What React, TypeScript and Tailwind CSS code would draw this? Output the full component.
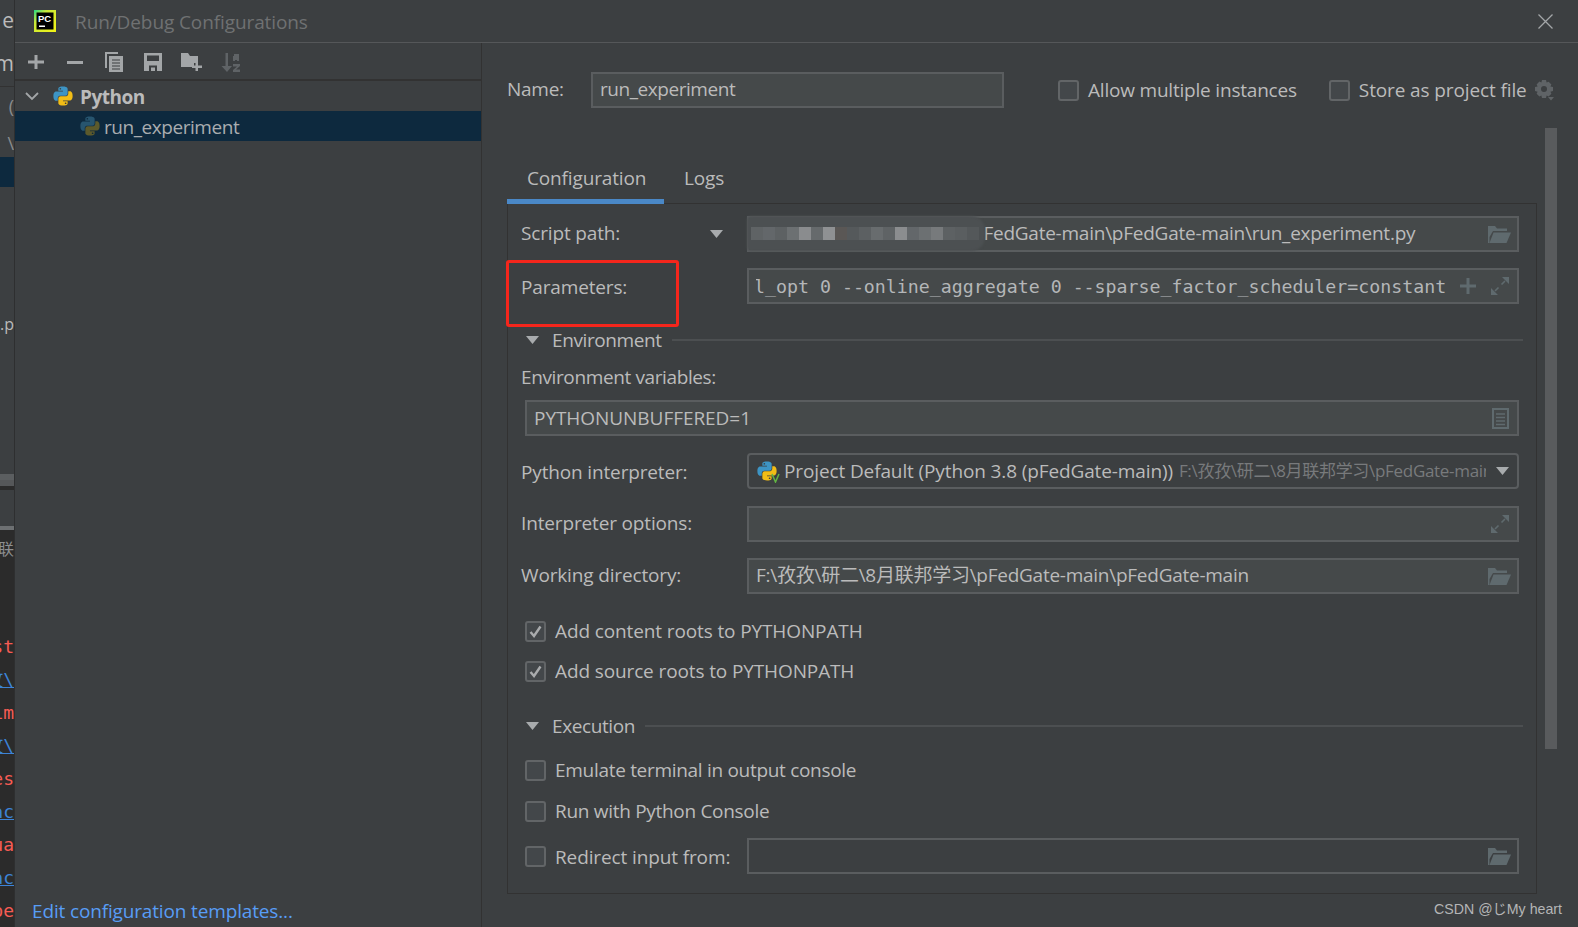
import type { ReactNode } from "react";

const SANS = "font-['Open_Sans','Noto_Sans_CJK_SC',sans-serif]";

const Triangle = ({ className = "" }: { className?: string }) => (
  <svg width="13" height="8" viewBox="0 0 14 9" className={className} preserveAspectRatio="none">
    <path d="M0 0h14L7 9z" fill="#a8abad" />
  </svg>
);

const PythonIcon = ({ dim = false, size = 22 }: { dim?: boolean; size?: number }) => (
  <svg width={size} height={size} viewBox="0 0 32 32" className="shrink-0">
    <path
      fill={dim ? "#27556f" : "#3d94c4"}
      d="M15.885 2.1c-7.1 0-6.651 3.07-6.651 3.07v3.19h6.752v1H6.545S2 8.8 2 16.005s4.013 6.912 4.013 6.912H8.33v-3.361s-.13-4.013 3.9-4.013h6.762s3.772.06 3.772-3.652V5.8s.572-3.712-6.842-3.712zm-3.732 2.137a1.214 1.214 0 1 1 0 2.428 1.214 1.214 0 0 1 0-2.428z"
    />
    <path
      fill={dim ? "#5c5a2c" : "#f2bd16"}
      d="M16.085 29.91c7.1 0 6.651-3.08 6.651-3.08v-3.18h-6.751v-1h9.441S30 23.16 30 15.965s-4.013-6.912-4.013-6.912H23.67V12.4s.13 4.013-3.9 4.013h-6.765s-3.772-.06-3.772 3.652v6.1s-.572 3.712 6.842 3.712zm3.732-2.137a1.214 1.214 0 1 1 0-2.428 1.214 1.214 0 0 1 0 2.428z"
    />
  </svg>
);

const FolderIcon = () => (
  <svg width="23" height="17" viewBox="0 0 23 17" className="shrink-0 -mr-[2px]">
    <path d="M0 0h7l2 2.500h10V5H5L1.500 11V17H0z" fill="#5f6a6e" />
    <path d="M5.500 6.500H23L18.500 17H1.500z" fill="#5f6a6e" />
  </svg>
);

const ExpandIcon = () => (
  <svg width="18" height="18" viewBox="0 0 18 18" className="shrink-0" fill="none">
    <path d="M11 0h7v7zM0 11l7 7H0z" fill="#5f6a6e" />
    <path d="M14 4l-3.500 3.500M4 14l3.500-3.500" stroke="#5f6a6e" strokeWidth="1.600" />
  </svg>
);

const PlusIcon = () => (
  <svg width="16" height="16" viewBox="0 0 16 16" className="shrink-0">
    <path d="M6.500 0h3v6.500H16v3H9.500V16h-3V9.500H0v-3h6.500z" fill="#5f6a6e" />
  </svg>
);

const NoteIcon = () => (
  <svg width="17" height="21" viewBox="0 0 17 21" className="shrink-0" fill="none">
    <rect x="1" y="1" width="15" height="19" stroke="#5f6a6e" strokeWidth="2" />
    <path d="M4 6h9M4 9.500h9M4 13h9M4 16.500h9" stroke="#5f6a6e" strokeWidth="1.600" />
  </svg>
);

const ToolbarIcons = () => (
  <div className="h-[38px] pl-px pt-[2px] flex items-center border-b-2 border-[#323232] shrink-0">
    <div className="w-[39px] flex justify-center">
      <svg width="16" height="14" viewBox="0 0 16 14">
        <path d="M6.500 0h3v5.500H16v3H9.500V14h-3V8.500H0v-3h6.500z" fill="#a3a6a8" />
      </svg>
    </div>
    <div className="w-[39px] flex justify-center">
      <svg width="16" height="3" viewBox="0 0 16 3">
        <rect width="16" height="3" fill="#a3a6a8" />
      </svg>
    </div>
    <div className="w-[39px] flex justify-center">
      <svg width="18" height="20" viewBox="0 0 18 20">
        <path d="M0 0h13v2H2v14H0z" fill="#a3a6a8" />
        <path d="M4 4h14v16H4z" fill="#a3a6a8" />
        <path d="M7 8h8M7 11h8M7 14h8M7 17h8" stroke="#3c3f41" strokeWidth="1.200" />
      </svg>
    </div>
    <div className="w-[39px] flex justify-center">
      <svg width="18" height="18" viewBox="0 0 18 18">
        <path d="M0 0h18v18H0z" fill="#a3a6a8" />
        <path d="M3 2.500h12V8H3zM5 12.500h8V18H5z" fill="#3c3f41" />
        <path d="M7 14.500h4V18H7z" fill="#a3a6a8" />
      </svg>
    </div>
    <div className="w-[39px] flex justify-center">
      <svg width="21" height="18" viewBox="0 0 21 18">
        <path d="M0 0h7l2 3h8v7h-4v4H0z" fill="#a3a6a8" />
        <path d="M14.500 9h2.500v3.500h4V15h-4v3h-2.500v-3H11v-2.500h3.500z" fill="#a3a6a8" />
      </svg>
    </div>
    <div className="w-[39px] flex justify-center">
      <svg width="20" height="19" viewBox="0 0 20 19">
        <path d="M4.500 0h2.500v13h4l-5 6-5.500-6h4z" fill="#5f6366" />
        <path d="M13 1h5v7h-2V7h-2v1h-2V3h1zM12 11h7v2l-4 3.500h4V19h-7v-2l4-3.500h-4z" fill="#5f6366" />
      </svg>
    </div>
  </div>
);

const Field = ({
  children,
  icon,
  plain = false,
  round = false,
  className = "",
}: {
  children?: ReactNode;
  icon?: ReactNode;
  plain?: boolean;
  round?: boolean;
  className?: string;
}) => (
  <div
    className={`relative h-[36px] flex items-center min-w-0 pl-[7px] pr-[8px] border-2 border-[#5a5d5f] ${
      plain ? "bg-[#3c3f41]" : "bg-[#45494a]"
    } ${round ? "rounded-[4px]" : ""} ${className}`}
  >
    <div className="flex-1 min-w-0 overflow-hidden whitespace-nowrap flex items-center">{children}</div>
    {icon}
  </div>
);

const Row = ({
  label,
  children,
  className = "",
  labelClass = "",
}: {
  label: ReactNode;
  children: ReactNode;
  className?: string;
  labelClass?: string;
}) => (
  <div className={`flex items-center pr-[17px] ${className}`}>
    <div className={`w-[239px] pl-[13px] shrink-0 whitespace-nowrap tracking-[-0.15px] ${labelClass}`}>{label}</div>
    <div className="flex-1 min-w-0">{children}</div>
  </div>
);

const Checkbox = ({ checked = false }: { checked?: boolean }) => (
  <span className="w-[21px] h-[21px] shrink-0 rounded-[3px] border-2 border-[#626567] bg-[#43474a] flex items-center justify-center">
    {checked && (
      <svg width="13" height="13" viewBox="0 0 13 13" fill="none">
        <path d="M1.500 7l3.500 4L11.500 1.500" stroke="#a9abad" strokeWidth="2.400" />
      </svg>
    )}
  </span>
);

const CheckRow = ({
  label,
  checked,
  className = "",
  tight = false,
}: {
  label: string;
  checked?: boolean;
  className?: string;
  tight?: boolean;
}) => (
  <div className={`h-[24px] pl-[17px] flex items-center gap-[9px] whitespace-nowrap ${className}`}>
    <Checkbox checked={checked} />
    <span className={tight ? "tracking-[-0.3px]" : "tracking-[-0.12px]"}>{label}</span>
  </div>
);

const Section = ({ title, className = "" }: { title: string; className?: string }) => (
  <div className={`h-[20px] pl-[18px] pr-[13px] flex items-center ${className}`}>
    <Triangle />
    <span className="ml-[13px] tracking-[-0.4px] whitespace-nowrap">{title}</span>
    <div className="flex-1 h-[2px] bg-[#4c4f51] ml-[10px]" />
  </div>
);

const SCRIPT_BLUR = [
  "#5f6365", "#63676a", "#5d6163", "#6c7072", "#8a8c8e", "#666a6c", "#8f9193", "#5a5755", "#55595b",
  "#5c6062", "#686c6e", "#5f6365", "#8b8d8f", "#63676a", "#6c7072", "#777a7c", "#5d6163", "#5a5e60",
  "#54585a",
];

const CODE_LINES = [
  { t: "st", c: "text-[#f75c54]", u: false },
  { t: "攻\\", c: "text-[#3d83d6]", u: true },
  { t: "im", c: "text-[#f75c54]", u: false },
  { t: "攻\\", c: "text-[#3d83d6]", u: true },
  { t: "es", c: "text-[#f75c54]", u: false },
  { t: "ac", c: "text-[#3d83d6]", u: true },
  { t: "ua", c: "text-[#f75c54]", u: false },
  { t: "ac", c: "text-[#3d83d6]", u: true },
  { t: "pe", c: "text-[#f75c54]", u: false },
];

const Sliver = () => (
  <div className="w-[15px] shrink-0 border-r border-[#2e2f30] h-full flex flex-col overflow-hidden text-[#bbbbbb] text-[21px]">
    <div className="h-[42px] flex items-center justify-end shrink-0">
      <span>e</span>
    </div>
    <div className="h-[45px] flex items-center justify-end border-b border-[#323232] shrink-0">
      <span>m</span>
    </div>
    <div className="h-[70px] flex flex-col items-end shrink-0 pt-[8px] text-[#8a8c8e] text-[18px]">
      <span className="leading-[22px]">(</span>
      <span className="leading-[22px] mt-[15px]">\</span>
    </div>
    <div className="h-[30px] bg-[#0d293e] shrink-0" />
    <div className="h-[149px] shrink-0 flex items-end justify-end text-[16px] leading-[24px]">
      <span>a.p</span>
    </div>
    <div className="h-[138px] shrink-0" />
    <div className="h-[6px] bg-[#5b5e60] shrink-0" />
    <div className="h-[6px] bg-[#555759] shrink-0" />
    <div className="h-[4px] bg-[#2b2b2b] shrink-0" />
    <div className="h-[36px] shrink-0" />
    <div className="h-[4px] bg-[#6d7072] shrink-0" />
    <div className="flex-1 bg-[#2b2b2b] font-['DejaVu_Sans_Mono','Noto_Sans_CJK_SC',monospace] text-[18px]">
      <div className="h-[30px] flex justify-end items-end text-[#8d8f91] text-[16px] font-['Noto_Sans_CJK_SC',sans-serif] whitespace-nowrap">
        月联
      </div>
      <div className="flex flex-col gap-[11px] pt-[76px]">
        {CODE_LINES.map((line, i) => (
          <div
            key={i}
            className={`h-[22px] leading-[22px] flex justify-end whitespace-nowrap ${line.c} ${line.u ? "underline" : ""}`}
          >
            {line.t}
          </div>
        ))}
      </div>
    </div>
  </div>
);

const TitleBar = () => (
  <div className="h-[43px] shrink-0 border-b border-[#555759] flex items-center pl-[19px] pr-[25px]">
    <svg width="22" height="22" viewBox="0 0 22 22" className="shrink-0">
      <defs>
        <linearGradient id="pc" x1="0" y1="0" x2="1" y2="1">
          <stop offset="0" stopColor="#21d789" />
          <stop offset="0.3" stopColor="#c8e83a" />
          <stop offset="1" stopColor="#f4f414" />
        </linearGradient>
      </defs>
      <rect width="22" height="22" fill="url(#pc)" />
      <rect x="2.500" y="2.500" width="17" height="17" fill="#000" />
      <text x="4" y="11.500" fontSize="9.500" fontWeight="700" fill="#fff" fontFamily="Liberation Sans">
        PC
      </text>
      <rect x="5" y="15.500" width="6" height="1.500" fill="#fff" />
    </svg>
    <span className="ml-[19px] pt-[2px] text-[#6f7172] tracking-[-0.1px]">Run/Debug Configurations</span>
    <svg width="15" height="15" viewBox="0 0 15 15" className="ml-auto" fill="none">
      <path d="M.5.5l14 14M14.500.5l-14 14" stroke="#a3a6a8" strokeWidth="1.300" />
    </svg>
  </div>
);

const TreePanel = () => (
  <div className="w-[467px] shrink-0 border-r border-[#323232] flex flex-col h-full">
    <ToolbarIcons />
    <div className="h-[30px] flex items-center pl-[10px] shrink-0">
      <svg width="14" height="9" viewBox="0 0 14 9" fill="none" className="shrink-0">
        <path d="M1 1l6 6 6-6" stroke="#a3a6a8" strokeWidth="1.800" />
      </svg>
      <span className="ml-[13px]">
        <PythonIcon />
      </span>
      <span className="ml-[6px] pt-[3px] font-bold tracking-[-0.5px]">Python</span>
    </div>
    <div className="h-[30px] bg-[#0d293e] flex items-center pl-[64px] shrink-0">
      <PythonIcon dim />
      <span className="ml-[3px] pt-[3px] text-[#a9adb0] tracking-[-0.45px]">run_experiment</span>
    </div>
    <div className="mt-auto pl-[17px] pb-[2px] text-[#589df6] tracking-[-0.15px]">Edit configuration templates...</div>
  </div>
);

const ConfigHeader = () => (
  <div className="h-[85px] shrink-0 pt-[29px] pl-[25px] flex items-start">
    <div className="h-[36px] w-[84px] pb-[2px] flex items-center tracking-[-0.25px]">Name:</div>
    <Field className="w-[413px]">
      <span className="tracking-[-0.45px] pb-[2px]">run_experiment</span>
    </Field>
    <div className="h-[36px] ml-[54px] flex items-center gap-[9px] tracking-[-0.2px] whitespace-nowrap">
      <Checkbox />
      <span>Allow multiple instances</span>
    </div>
    <div className="h-[36px] ml-[32px] flex items-center gap-[9px] tracking-[-0.12px] whitespace-nowrap">
      <Checkbox />
      <span>Store as project file</span>
      <svg width="20" height="21" viewBox="0 0 20 21" className="-ml-[2px]">
        <path
          fill="#5f6366"
          d="M8 0h4l.6 2.600 2-.9 2.800 2.800-1 2 2.600.6v4l-2.600.6 1 2-2.800 2.800-2-1L12 18H8l-.6-2.500-2 1-2.800-2.800 1-2L1 11V7l2.600-.6-1-2 2.800-2.800 2 1zM10 6a3 3 0 1 0 0 6 3 3 0 0 0 0-6z"
        />
        <path fill="#5f6366" d="M14 17h6l-3 3.500z" />
      </svg>
    </div>
  </div>
);

const RunConfigForm = () => (
  <div className="h-[690px] border-x border-b border-[#323232] pt-[12px]">
    <div className="flex items-center pr-[17px]">
      <div className="w-[239px] pl-[13px] pr-[24px] flex items-center justify-between shrink-0">
        <span className="tracking-[-0.15px] pb-[2px]">Script path:</span>
        <Triangle />
      </div>
      <Field className="flex-1 overflow-visible" icon={<FolderIcon />}>
        <span className="ml-[216px] pb-[2px] tracking-[-0.24px]">pFedGate-main\pFedGate-main\run_experiment.py</span>
        {/* pixelated smear over the private part of the path */}
        <div className="absolute left-[-2px] top-[-2px] w-[238px] h-[35px] rounded-l-[4px] rounded-r-[14px] bg-[#4c5052] blur-[1px]" />
        <div className="absolute left-[2px] top-[9px] h-[13px] flex">
          {SCRIPT_BLUR.map((color, i) => (
            <div key={i} className="w-[12px] h-full" style={{ backgroundColor: color }} />
          ))}
        </div>
      </Field>
    </div>

    <Row label="Parameters:" labelClass="pt-[2px] tracking-[-0.5px]" className="mt-[16px]">
      <Field
        icon={
          <div className="flex items-center gap-[15px]">
            <PlusIcon />
            <ExpandIcon />
          </div>
        }
      >
        <span className="-ml-[2px] pt-[2px] font-['DejaVu_Sans_Mono',monospace] text-[18.25px] text-[#b4b6b8]">
          l_opt 0 --online_aggregate 0 --sparse_factor_scheduler=constant
        </span>
      </Field>
    </Row>

    <Section title="Environment" className="mt-[26px]" />
    <div className="mt-[17px] h-[20px] pl-[13px] flex items-center tracking-[-0.38px]">Environment variables:</div>
    <div className="mt-[13px] ml-[17px] mr-[17px]">
      <Field icon={<NoteIcon />}>
        <span className="tracking-[-0.05px]">PYTHONUNBUFFERED=1</span>
      </Field>
    </div>

    <Row label="Python interpreter:" labelClass="pt-[2px]" className="mt-[17px]">
      <Field plain round icon={<Triangle className="ml-[10px]" />}>
        <span className="relative shrink-0">
          <PythonIcon />
          <svg width="9" height="10" viewBox="0 0 9 10" className="absolute right-[-2px] bottom-[-1px]" fill="none">
            <path d="M1 1l3.500 8L8 1" stroke="#62b543" strokeWidth="1.500" />
          </svg>
        </span>
        <span className="ml-[6px] tracking-[-0.12px]">Project Default (Python 3.8 (pFedGate-main))</span>
        <span className="ml-[6px] text-[17px] text-[#787a7c] tracking-[-0.3px]">F:\孜孜\研二\8月联邦学习\pFedGate-main</span>
      </Field>
    </Row>
    <Row label="Interpreter options:" labelClass="pb-[2px]" className="mt-[17px]">
      <Field icon={<ExpandIcon />} />
    </Row>
    <Row label="Working directory:" labelClass="pb-[2px]" className="mt-[16px]">
      <Field icon={<FolderIcon />}>
        <span className="tracking-[-0.26px] pb-[2px]">F:\孜孜\研二\8月联邦学习\pFedGate-main\pFedGate-main</span>
      </Field>
    </Row>

    <CheckRow label="Add content roots to PYTHONPATH" checked className="mt-[25px]" />
    <CheckRow label="Add source roots to PYTHONPATH" checked className="mt-[16px]" />

    <Section title="Execution" className="mt-[33px]" />
    <CheckRow label="Emulate terminal in output console" tight className="mt-[22px]" />
    <CheckRow label="Run with Python Console" tight className="mt-[17px]" />

    <div className="mt-[15px] flex items-center pr-[17px]">
      <div className="w-[239px] shrink-0 pl-[17px] flex items-center gap-[9px] whitespace-nowrap tracking-[-0.12px]">
        <Checkbox />
        <span className="pt-[2px]">Redirect input from:</span>
      </div>
      <Field plain className="flex-1" icon={<FolderIcon />} />
    </div>
  </div>
);

export default function App() {
  return (
    <div
      className={`relative w-screen h-screen overflow-hidden flex bg-[#3c3f41] text-[#bbbbbb] text-[19px] ${SANS}`}
    >
      <Sliver />
      <div className="flex-1 min-w-0 flex flex-col">
        <TitleBar />
        <div className="flex-1 flex min-h-0">
          <TreePanel />
          <div className="flex-1 min-w-0 flex flex-col">
            <ConfigHeader />
            <div className="flex">
              <div className="w-[1055px] shrink-0 pl-[25px] pt-[32px]">
                <div className="h-[44px] border-b border-[#323232] flex">
                  <div className="w-[157px] h-[44px] border-b-[5px] border-[#4a88c7] pl-[20px] pb-[2px] flex items-center tracking-[-0.15px]">
                    Configuration
                  </div>
                  <div className="ml-[20px] h-[44px] pb-[7px] flex items-center tracking-[-0.15px]">Logs</div>
                </div>
                <RunConfigForm />
              </div>
              <div className="ml-[8px] w-[12px] h-[621px] bg-[#595b5d] shrink-0" />
            </div>
          </div>
        </div>
      </div>

      {/* red annotation box drawn over the screenshot */}
      <div className="absolute left-[506px] top-[260px] w-[173px] h-[67px] border-[3px] border-[#f5261c] rounded-[3px]" />

      <div className="absolute right-[16px] top-[899px] text-[14.2px] leading-[20px] text-[#b4b5b6] font-['Liberation_Sans','Noto_Sans_CJK_JP',sans-serif] whitespace-nowrap">
        CSDN @じMy heart
      </div>
    </div>
  );
}
